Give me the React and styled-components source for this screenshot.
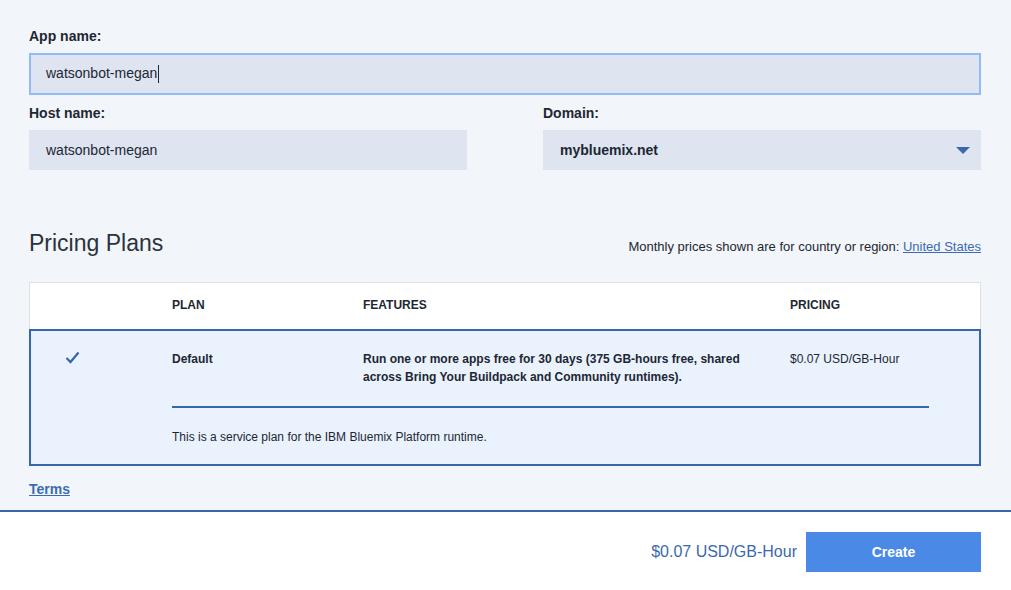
import React from "react"
import styled, { createGlobalStyle } from "styled-components"

const GlobalStyle = createGlobalStyle`
  html, body {
    margin: 0;
    padding: 0;
    background: #f2f5f9;
  }
  body {
    font-family: "Liberation Sans", Arial, sans-serif;
    color: #1d2733;
  }
`;

const Page = styled.div`
  display: flex;
  flex-direction: column;
  width: 1011px;
  height: 590px;
  background: #f2f5f9;
  overflow: hidden;
`;

const Main = styled.div`
  padding: 28px 30px 0 29px;
`;

const Field = styled.div`
  display: flex;
  flex-direction: column;
`;

const Label = styled.label`
  font-size: 14px;
  font-weight: 700;
  line-height: 17px;
  margin-bottom: 8px;
`;

const FieldBox = styled.div`
  display: flex;
  align-items: center;
  justify-content: space-between;
  box-sizing: border-box;
  height: ${(p) => (p.$focused ? "42px" : "40px")};
  padding: 0 ${(p) => (p.$focused ? "15px" : "17px")};
  background: #dee4f0;
  border: ${(p) => (p.$focused ? "2px solid #92bbf6" : "none")};
  font-size: 14px;
  font-weight: ${(p) => (p.$bold ? 700 : 400)};
  color: #1d2733;
`;

const Caret = styled.span`
  display: inline-block;
  width: 1px;
  height: 18px;
  margin-left: 1px;
  background: #1d2733;
  vertical-align: middle;
`;

const Row = styled.div`
  display: grid;
  grid-template-columns: 1fr 1fr;
  column-gap: 76px;
  margin-top: 10px;
`;

const Arrow = styled.span`
  width: 0;
  height: 0;
  border-left: 7px solid transparent;
  border-right: 7px solid transparent;
  border-top: 7px solid #3b68ad;
  margin-right: -6px;
`;

const PlansHeader = styled.div`
  display: flex;
  align-items: baseline;
  justify-content: space-between;
  margin-top: 59px;
`;

const Heading = styled.h2`
  margin: 0;
  font-size: 23px;
  font-weight: 300;
  line-height: 28px;
  color: #2a333d;
`;

const RegionNote = styled.div`
  font-size: 13px;
  color: #1d2733;
`;

const Link = styled.a`
  color: #3b6bb5;
  text-decoration: underline;
  font-weight: ${(p) => (p.$bold ? 700 : 400)};
  cursor: pointer;
`;

const Table = styled.div`
  margin-top: 25px;
`;

const HeaderRow = styled.div`
  display: grid;
  grid-template-columns: 142px 191px 427px 1fr;
  padding: 14px 0 16px;
  background: #fff;
  border: 1px solid #dde1e6;
  border-bottom: none;
`;

const HeaderCell = styled.div`
  font-size: 12px;
  font-weight: 700;
  line-height: 16px;
  text-transform: uppercase;
  color: #1d2733;
`;

const PlanRow = styled.div`
  display: grid;
  grid-template-columns: 141px 191px 427px 1fr;
  padding: 19px 0 18px;
  background: #eaf2fd;
  border: 2px solid #3566ae;
`;

const Cell = styled.div`
  font-size: 12px;
  line-height: 18px;
  font-weight: ${(p) => (p.$bold ? 700 : 400)};
  padding-right: ${(p) => p.$pr || 0}px;
`;

const CheckCell = styled.div`
  padding: 1px 0 0 34px;
  line-height: 0;
`;

const Divider = styled.div`
  grid-column: 2 / -1;
  height: 2px;
  margin: 20px 50px 20px 0;
  background: #3566ae;
`;

const Description = styled.div`
  grid-column: 2 / -1;
  font-size: 12px;
  line-height: 18px;
`;

const TermsRow = styled.div`
  margin-top: 15px;
  font-size: 14px;
  line-height: 17px;
`;

const Footer = styled.div`
  display: flex;
  align-items: center;
  justify-content: flex-end;
  gap: 9px;
  margin-top: 12px;
  height: 80px;
  box-sizing: border-box;
  padding: 2px 30px 0 0;
  background: #fff;
  border-top: 2px solid #3566ae;
`;

const Total = styled.div`
  font-size: 16px;
  color: #3b68ad;
`;

const Button = styled.button`
  width: 175px;
  height: 40px;
  border: none;
  background: #4a8ae6;
  color: #fff;
  font-family: inherit;
  font-size: 14px;
  font-weight: 700;
  cursor: pointer;
`;

const Check = () => (
  <svg width="15" height="13" viewBox="0 0 15 13">
    <polyline points="1.5,7 5.5,11 13.5,1.5" fill="none" stroke="#3566ae" strokeWidth="2.2" />
  </svg>
);

export default function App() {
  return (
    <Page>
      <GlobalStyle />
      <Main>
        <Field>
          <Label>App name:</Label>
          <FieldBox $focused>
            <span>watsonbot-megan<Caret /></span>
          </FieldBox>
        </Field>
        <Row>
          <Field>
            <Label>Host name:</Label>
            <FieldBox>watsonbot-megan</FieldBox>
          </Field>
          <Field>
            <Label>Domain:</Label>
            <FieldBox $bold>
              <span>mybluemix.net</span>
              <Arrow />
            </FieldBox>
          </Field>
        </Row>

        <PlansHeader>
          <Heading>Pricing Plans</Heading>
          <RegionNote>
            Monthly prices shown are for country or region: <Link>United States</Link>
          </RegionNote>
        </PlansHeader>

        <Table>
          <HeaderRow>
            <div />
            <HeaderCell>Plan</HeaderCell>
            <HeaderCell>Features</HeaderCell>
            <HeaderCell>Pricing</HeaderCell>
          </HeaderRow>
          <PlanRow>
            <CheckCell><Check /></CheckCell>
            <Cell $bold>Default</Cell>
            <Cell $bold $pr={40}>
              Run one or more apps free for 30 days (375 GB-hours free, shared across Bring Your Buildpack and Community runtimes).
            </Cell>
            <Cell>$0.07 USD/GB-Hour</Cell>
            <Divider />
            <Description>This is a service plan for the IBM Bluemix Platform runtime.</Description>
          </PlanRow>
        </Table>

        <TermsRow>
          <Link $bold>Terms</Link>
        </TermsRow>
      </Main>
      <Footer>
        <Total>$0.07 USD/GB-Hour</Total>
        <Button>Create</Button>
      </Footer>
    </Page>
  );
}
